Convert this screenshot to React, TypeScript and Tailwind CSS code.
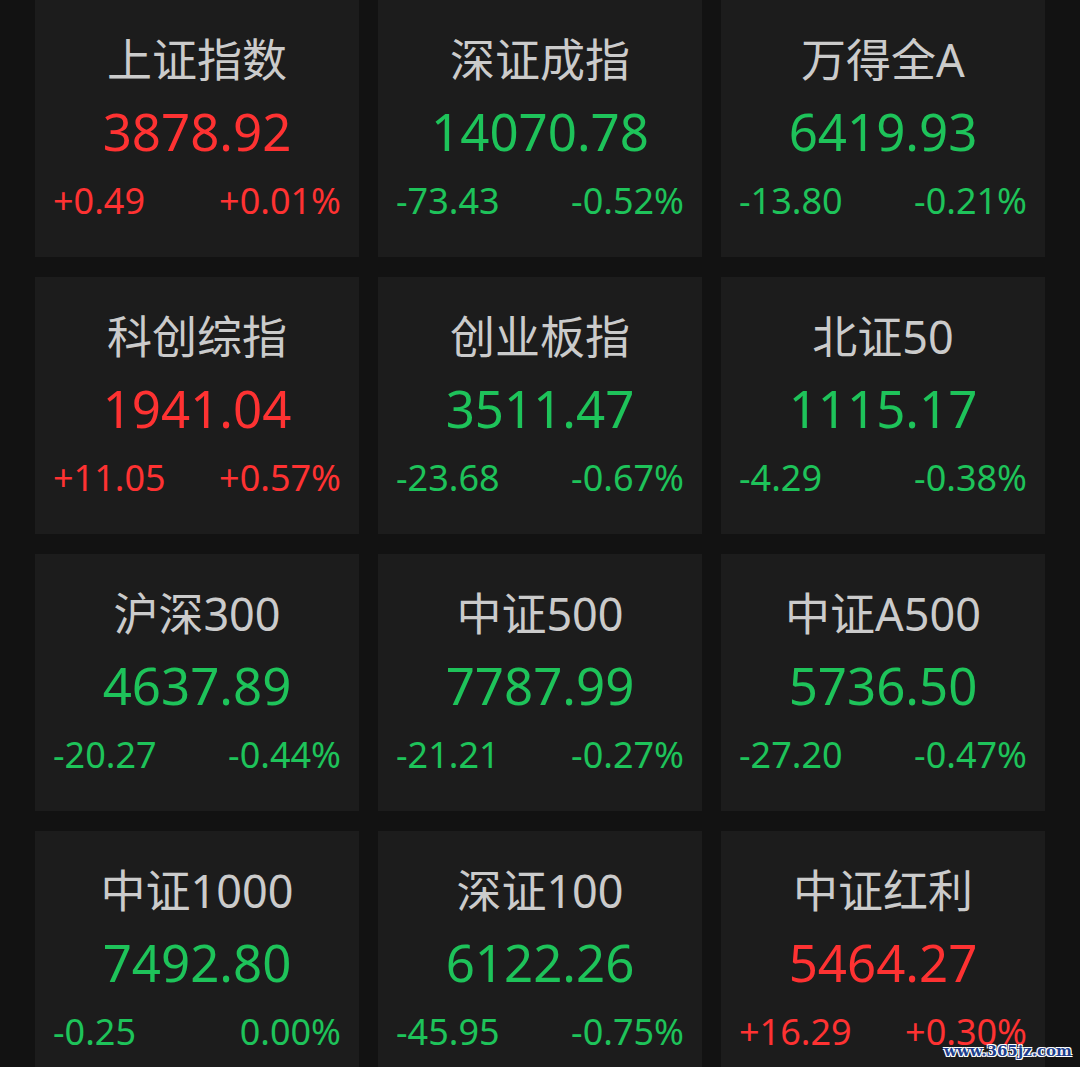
import React from "react";

type Quote = {
  name: string;
  value: string;
  change: string;
  pct: string;
};

const quotes: Quote[] = [
  { name: "上证指数", value: "3878.92", change: "+0.49", pct: "+0.01%" },
  { name: "深证成指", value: "14070.78", change: "-73.43", pct: "-0.52%" },
  { name: "万得全A", value: "6419.93", change: "-13.80", pct: "-0.21%" },
  { name: "科创综指", value: "1941.04", change: "+11.05", pct: "+0.57%" },
  { name: "创业板指", value: "3511.47", change: "-23.68", pct: "-0.67%" },
  { name: "北证50", value: "1115.17", change: "-4.29", pct: "-0.38%" },
  { name: "沪深300", value: "4637.89", change: "-20.27", pct: "-0.44%" },
  { name: "中证500", value: "7787.99", change: "-21.21", pct: "-0.27%" },
  { name: "中证A500", value: "5736.50", change: "-27.20", pct: "-0.47%" },
  { name: "中证1000", value: "7492.80", change: "-0.25", pct: "0.00%" },
  { name: "深证100", value: "6122.26", change: "-45.95", pct: "-0.75%" },
  { name: "中证红利", value: "5464.27", change: "+16.29", pct: "+0.30%" },
];

const QuoteCard: React.FC<{ q: Quote }> = ({ q }) => {
  const up = q.change.startsWith("+");
  const color = up ? "text-[#fe3232]" : "text-[#1ec35a]";
  return (
    <div className="h-[257px] bg-[#1c1c1c] flex flex-col items-center pt-[32px]">
      <div className="text-[45px] leading-[56px] text-[#cbcbcb]">{q.name}</div>
      <div className={`mt-[13px] text-[51px] leading-[60px] ${color}`}>{q.value}</div>
      <div className={`mt-[20px] w-full flex justify-between px-[18px] text-[36px] leading-[40px] ${color}`}>
        <span>{q.change}</span>
        <span>{q.pct}</span>
      </div>
    </div>
  );
};

const App: React.FC = () => {
  return (
    <div
      className="relative w-[1080px] h-[1067px] overflow-hidden bg-[#121212] px-[35px]"
      style={{ fontFamily: '"Noto Sans", "Noto Sans CJK SC", sans-serif' }}
    >
      <div className="grid grid-cols-3 gap-x-[19px] gap-y-[20px]">
        {quotes.map((q) => (
          <QuoteCard key={q.name} q={q} />
        ))}
      </div>
      <div
        className="absolute right-[8px] bottom-[6px] text-[15px] leading-[20px] font-bold text-[#1d3f8e] [text-shadow:_1px_1px_0_#fff,_-1px_-1px_0_#fff,_1px_-1px_0_#fff,_-1px_1px_0_#fff]"
        style={{ fontFamily: '"DejaVu Serif", serif' }}
      >
        www.365jz.com
      </div>
    </div>
  );
};

export default App;
